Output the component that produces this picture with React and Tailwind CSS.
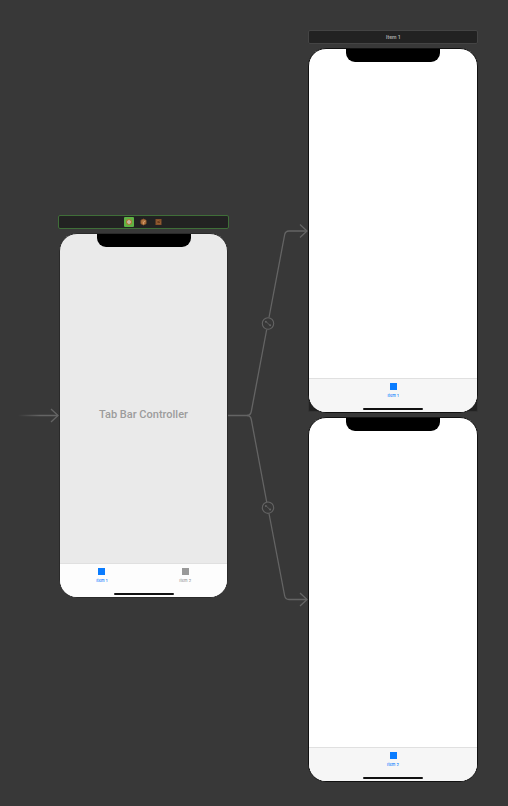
import React from "react";

function TabItem({ label, active }) {
  return (
    <button
      type="button"
      className={
        "flex flex-1 flex-col items-center pt-1 " +
        (active ? "text-[#0a7cff]" : "text-[#999999]")
      }
    >
      <span className="size-[7px] bg-current" />
      <span className="mt-[3px] text-[4px] leading-[6px] font-medium">{label}</span>
    </button>
  );
}

function Phone({ title, tabs, screen, bar }) {
  return (
    <section
      className={
        "flex h-[365px] flex-col overflow-hidden rounded-[18px] border " +
        screen
      }
    >
      <div className="mx-auto h-[13px] w-[94px] shrink-0 rounded-b-[9px] bg-black" />
      <div className="flex flex-1 items-center justify-center pt-5">
        {title && (
          <h1 className="font-['Roboto','Liberation_Sans',sans-serif] text-[11px] leading-[14px] font-medium whitespace-nowrap text-[#9c9c9c]">
            {title}
          </h1>
        )}
      </div>
      <nav className={"flex h-[34px] shrink-0 flex-col border-t " + bar}>
        <div className="flex">
          {tabs.map((tab) => (
            <TabItem key={tab.label} label={tab.label} active={tab.active} />
          ))}
        </div>
        <div className="mx-auto mt-auto mb-[2px] h-[2px] w-[60px] rounded-full bg-[#111111]" />
      </nav>
    </section>
  );
}

function SceneIcons() {
  return (
    <svg width="40" height="10" viewBox="0 0 40 10" aria-hidden="true">
      <rect width="10" height="10" rx="1" fill="#5fb244" />
      <circle cx="5" cy="5" r="2.4" fill="#d9d6cc" stroke="#a87a35" strokeWidth="1.3" />
      <rect x="4.4" y="4.4" width="1.2" height="1.2" fill="#7d7a70" />
      <path d="M19.500 2l2.600 1.300v3.400L19.500 8l-2.600-1.300V3.300z" fill="#b0733f" stroke="#8a5529" strokeWidth=".8" />
      <path d="M19.500 5V7.400M19.500 5l2-1" stroke="#d8a476" strokeWidth=".8" />
      <rect x="31.500" y="2" width="6" height="6" fill="#84502a" />
      <path d="M33 3.500h2l1.500 1.500v1.500H33z" fill="#6a3d1c" stroke="#a5693d" strokeWidth=".6" />
    </svg>
  );
}

function Segues() {
  return (
    <svg
      className="absolute top-0 left-0"
      width="508"
      height="806"
      viewBox="0 0 508 806"
      fill="none"
      stroke="#646464"
      strokeWidth="1.3"
      aria-hidden="true"
    >
      <defs>
        <linearGradient id="entry" gradientUnits="userSpaceOnUse" x1="18" y1="0" x2="40" y2="0">
          <stop stopColor="#646464" stopOpacity="0" />
          <stop offset="1" stopColor="#646464" />
        </linearGradient>
      </defs>
      <path d="M18 415.5H58" stroke="url(#entry)" />
      <path d="M51 409l7 6.500-7 6.500" />
      <path d="M228 415.500H247Q250.500 415.500 251.300 411.500L266.700 329.500" />
      <path d="M269 317.500L284.600 235Q285.300 231 289 231H307" />
      <path d="M300 224.500l7 6.500-7 6.500" />
      <path d="M247 415.500Q250.500 415.500 251.300 419.500L266.700 502" />
      <path d="M269 513.500L284.600 595.500Q285.300 599.500 289 599.500H307" />
      <path d="M300 593l7 6.500-7 6.500" />
      <g strokeWidth="1.1">
        <circle cx="268" cy="323.500" r="5.700" />
        <circle cx="268" cy="507.700" r="5.700" />
        <path d="M266.500 322l3 3M266.500 506.200l3 3" strokeWidth=".9" />
      </g>
      <g fill="#646464" stroke="none">
        <circle cx="265.900" cy="321.800" r="1" />
        <circle cx="270.100" cy="325.300" r="1" />
        <circle cx="265.900" cy="506" r="1" />
        <circle cx="270.100" cy="509.500" r="1" />
      </g>
    </svg>
  );
}

export default function App() {
  return (
    <main className="relative min-h-screen overflow-hidden bg-[#383838] font-['Inter','Liberation_Sans',sans-serif]">
      <div className="absolute top-[215px] left-[58px] flex flex-col items-center gap-1">
        <header className="flex h-[14px] w-[171px] items-center justify-center rounded-[2px] border border-[#3f6e38] bg-[#222222]">
          <SceneIcons />
        </header>
        <Phone
          title="Tab Bar Controller"
          screen="w-[169px] border-[#2a2a2a] bg-[#eaeaea]"
          bar="border-[#e0e0e0] bg-[#fdfdfd]"
          tabs={[{ label: "Item 1", active: true }, { label: "Item 2" }]}
        />
      </div>
      <div className="absolute top-[398px] left-[308px] flex flex-col gap-[5px]">
        <header className="h-[14px] w-[170px] rounded-[2px] border border-[#333333] bg-[#222222]" />
        <Phone
          screen="w-[170px] border-[#111111] bg-white"
          bar="border-[#e0e0e0] bg-[#f6f6f6]"
          tabs={[{ label: "Item 2", active: true }]}
        />
      </div>
      <div className="absolute top-[30px] left-[308px] flex flex-col gap-1">
        <header className="flex h-[14px] w-[170px] items-center justify-center rounded-[2px] border border-[#444444] bg-[#222222] text-[5px] leading-[8px] font-semibold text-[#b0b0b0]">
          Item 1
        </header>
        <Phone
          screen="w-[170px] border-[#111111] bg-white"
          bar="border-[#e0e0e0] bg-[#f6f6f6]"
          tabs={[{ label: "Item 1", active: true }]}
        />
      </div>
      <Segues />
    </main>
  );
}
